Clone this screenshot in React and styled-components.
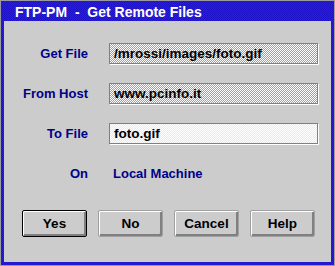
import React from 'react';
import styled, { createGlobalStyle } from 'styled-components';

const GlobalStyle = createGlobalStyle`
  html, body {
    margin: 0;
    padding: 0;
    background: #cccccc;
  }
  * {
    box-sizing: border-box;
  }
`;

// 1px dither used by the frame, title bar and the entry fields
const checker = (a, b) =>
  `repeating-conic-gradient(${a} 0 25%, ${b} 0 50%) 0 0 / 2px 2px`;

const Frame = styled.div`
  width: 335px;
  height: 266px;
  display: flex;
  flex-direction: column;
  border: 1px solid #9c9c9c;
  padding: 0 3px 3px 3px;
  background: ${checker('#880088', '#1c10c8')};
  font-family: 'Liberation Sans', Arial, sans-serif;
  font-weight: bold;
  font-size: 13px;
`;

const TitleBar = styled.div`
  height: 20px;
  flex-shrink: 0;
  display: flex;
  align-items: center;
  padding-left: 11px;
  padding-top: 2px;
  color: #ffffff;
  font-size: 14px;
  white-space: pre;
`;

const Client = styled.div`
  flex: 1;
  background: #cccccc;
  padding: 22px 0 0 0;
  display: flex;
  flex-direction: column;
`;

const Form = styled.div`
  display: grid;
  grid-template-columns: 84px 209px;
  grid-auto-rows: 21px;
  column-gap: 21px;
  row-gap: 19px;
`;

const Label = styled.div`
  color: #000088;
  display: flex;
  align-items: center;
  justify-content: flex-end;
`;

const Field = styled.div`
  display: flex;
  align-items: center;
  padding: 0 4px;
  color: #000000;
  font-size: 13.5px;
  border: 1px solid #808080;
  box-shadow: 1px 1px 0 #ffffff;
  background: ${(p) =>
    p.$editable ? checker('#ffff40', '#ffffff') : checker('#a0a0a0', '#ffffff')};
  white-space: nowrap;
  overflow: hidden;
`;

const Value = styled.div`
  color: #000088;
  display: flex;
  align-items: center;
  padding-left: 4px;
`;

const ButtonRow = styled.div`
  display: flex;
  gap: 11px;
  padding: 26px 0 0 18px;
`;

const Button = styled.button`
  width: 65px;
  height: 27px;
  padding: 0;
  font: inherit;
  font-size: 13.5px;
  color: #000000;
  background: #cccccc;
  border: 1px solid ${(p) => (p.$default ? '#000000' : '#a0a0a0')};
  border-radius: 2px;
  box-shadow: inset 1px 1px 0 #ffffff, inset -2px -2px 0 #808080;
`;

const App = () => {
  return (
    <>
      <GlobalStyle />
      <Frame>
        <TitleBar>{'FTP-PM  -  Get Remote Files'}</TitleBar>
        <Client>
          <Form>
            <Label>Get File</Label>
            <Field>/mrossi/images/foto.gif</Field>
            <Label>From Host</Label>
            <Field>www.pcinfo.it</Field>
            <Label>To File</Label>
            <Field $editable>foto.gif</Field>
            <Label>On</Label>
            <Value>Local Machine</Value>
          </Form>
          <ButtonRow>
            <Button $default>Yes</Button>
            <Button>No</Button>
            <Button>Cancel</Button>
            <Button>Help</Button>
          </ButtonRow>
        </Client>
      </Frame>
    </>
  );
};

export default App;
